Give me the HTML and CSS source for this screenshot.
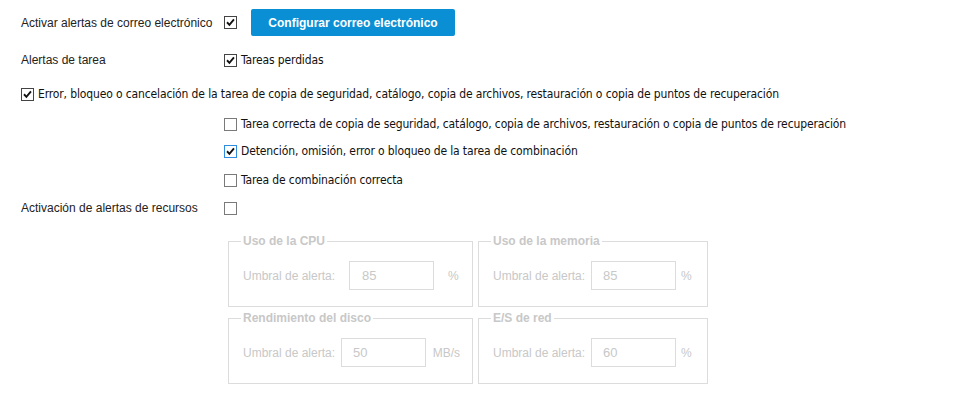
FILE: index.html
```html
<!DOCTYPE html>
<html lang="es">
<head>
<meta charset="utf-8">
<title>Alertas</title>
<link rel="stylesheet" href="styles.css">
</head>
<body>
<div class="form">
  <div class="row row-email">
    <span class="label">Activar alertas de correo electrónico</span>
    <span class="cb checked"><svg viewBox="0 0 13 13"><path d="M2.4 6.2 L5.2 9.2 L10.6 2.8"/></svg></span>
    <button class="btn">Configurar correo electrónico</button>
  </div>
  <div class="row row-task">
    <span class="label">Alertas de tarea</span>
    <span class="cb checked"><svg viewBox="0 0 13 13"><path d="M2.4 6.2 L5.2 9.2 L10.6 2.8"/></svg></span>
    <span class="cblabel">Tareas perdidas</span>
  </div>
  <div class="row row-error">
    <span class="cb checked"><svg viewBox="0 0 13 13"><path d="M2.4 6.2 L5.2 9.2 L10.6 2.8"/></svg></span>
    <span class="cblabel">Error, bloqueo o cancelación de la tarea de copia de seguridad, catálogo, copia de archivos, restauración o copia de puntos de recuperación</span>
  </div>
  <div class="sub">
    <div class="row subrow r1">
      <span class="cb"></span>
      <span class="cblabel">Tarea correcta de copia de seguridad, catálogo, copia de archivos, restauración o copia de puntos de recuperación</span>
    </div>
    <div class="row subrow r2">
      <span class="cb checked focus"><svg viewBox="0 0 13 13"><path d="M2.4 6.2 L5.2 9.2 L10.6 2.8"/></svg></span>
      <span class="cblabel">Detención, omisión, error o bloqueo de la tarea de combinación</span>
    </div>
    <div class="row subrow r3">
      <span class="cb"></span>
      <span class="cblabel">Tarea de combinación correcta</span>
    </div>
  </div>
  <div class="row row-res">
    <span class="label">Activación de alertas de recursos</span>
    <span class="cb"></span>
  </div>
  <div class="res-grid">
    <fieldset class="fs">
      <legend>Uso de la CPU</legend>
      <div class="fs-row">
        <span class="fs-label">Umbral de alerta:</span>
        <span class="inp inp-cpu">85</span>
        <span class="unit unit-cpu">%</span>
      </div>
    </fieldset>
    <fieldset class="fs">
      <legend>Uso de la memoria</legend>
      <div class="fs-row">
        <span class="fs-label">Umbral de alerta:</span>
        <span class="inp">85</span>
        <span class="unit">%</span>
      </div>
    </fieldset>
    <fieldset class="fs">
      <legend>Rendimiento del disco</legend>
      <div class="fs-row">
        <span class="fs-label">Umbral de alerta:</span>
        <span class="inp">50</span>
        <span class="unit unit-mb">MB/s</span>
      </div>
    </fieldset>
    <fieldset class="fs">
      <legend>E/S de red</legend>
      <div class="fs-row">
        <span class="fs-label">Umbral de alerta:</span>
        <span class="inp">60</span>
        <span class="unit">%</span>
      </div>
    </fieldset>
  </div>
</div>
</body>
</html>
```

FILE: styles.css
```css
* { box-sizing: border-box; }
html, body { margin: 0; padding: 0; background: #fff; }
body {
  font-family: "Liberation Sans", Arial, sans-serif;
  font-size: 12px;
  color: #222;
}
.form { padding: 9px 0 0 21px; }
.row { display: flex; align-items: center; }
.label { width: 203px; flex: none; }
.cb {
  width: 13px; height: 13px; flex: none;
  border: 1px solid #7a7a7a;
  background: #fff;
  display: inline-flex;
}
.cb.checked { border-color: #444; }
.cb.focus { border-color: #2e8de0; }
.cb svg { width: 11px; height: 11px; }
.cb path { fill: none; stroke: #111; stroke-width: 2.2; }
.cblabel {
  margin-left: 4px;
  font-family: "DejaVu Sans", sans-serif;
  font-stretch: condensed;
  font-size: 12px;
  letter-spacing: -0.13px;
  color: #111;
}
.row-email { height: 27px; }
.btn {
  margin-left: 14px;
  width: 204px; height: 27px;
  border: none; border-radius: 2px;
  background: #0b8fd4;
  color: #fff;
  font-family: "Liberation Sans", Arial, sans-serif;
  font-weight: bold;
  font-size: 12px;
  padding: 0;
}
.row-task { height: 20px; margin-top: 14px; }
.row-error { height: 20px; margin-top: 14px; }
.sub { padding-left: 203px; }
.subrow { height: 20px; }
.r1 { margin-top: 10px; }
.r2 { margin-top: 7px; }
.r3 { margin-top: 9px; }
.row-res { height: 20px; margin-top: 8px; }
.res-grid {
  margin: 16px 0 0 207px;
  display: grid;
  grid-template-columns: 245px 230px;
  column-gap: 5px;
  row-gap: 4px;
}
.fs {
  margin: 0;
  border: 1px solid #dcdcdc;
  padding: 0 12px 16px 14px;
  min-width: 0;
}
.fs legend {
  padding: 0 2px;
  margin-left: -2px;
  font-weight: bold;
  color: #c8c8c8;
  font-size: 12px;
  line-height: 14px;
}
.fs-row { display: flex; align-items: center; margin-top: 13px; color: #c8c8c8; }
.fs-label { width: 98px; flex: none; font-size: 12px; }
.inp {
  width: 85px; height: 29px;
  border: 1px solid #dcdcdc;
  padding-left: 11px;
  display: flex; align-items: center;
  font-size: 13px;
  color: #c8c8c8;
}
.inp-cpu { margin-left: 8px; padding-left: 12px; }
.unit { margin-left: 5px; font-size: 12px; }
.unit-cpu { margin-left: 14px; }
.unit-mb { margin-left: 7px; }
```
